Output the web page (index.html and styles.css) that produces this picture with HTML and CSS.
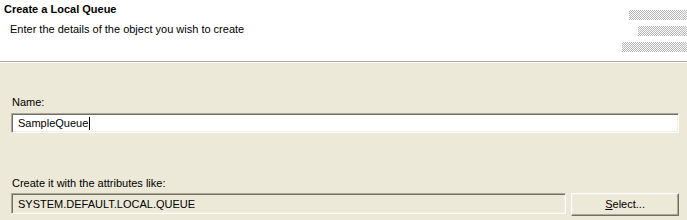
FILE: index.html
```html
<!DOCTYPE html>
<html>
<head>
<meta charset="utf-8">
<link rel="stylesheet" href="styles.css">
</head>
<body>
<div class="header">
  <div class="titles">
    <div class="title">Create a Local Queue</div>
    <div class="subtitle">Enter the details of the object you wish to create</div>
  </div>
  <div class="banner">
    <div class="bar bar1"></div>
    <div class="bar bar2"></div>
    <div class="bar bar3"></div>
  </div>
</div>
<div class="content">
  <div class="label name-label">Name:</div>
  <div class="field edit">SampleQueue<span class="caret"></span></div>
  <div class="label like-label">Create it with the attributes like:</div>
  <div class="row">
    <div class="field readonly">SYSTEM.DEFAULT.LOCAL.QUEUE</div>
    <div class="button"><span class="u">S</span>elect...</div>
  </div>
</div>
</body>
</html>
```
FILE: styles.css
```css
html, body {
  margin: 0;
  padding: 0;
  background: #ece9d8;
}
body {
  font-family: "Liberation Sans", Arial, sans-serif;
  font-size: 11px;
  line-height: 13px;
  color: #000;
  width: 687px;
  height: 220px;
  overflow: hidden;
}
.header {
  background: #fff;
  height: 61px;
  border-bottom: 1px solid #aca899;
  box-shadow: 0 1px 0 #fff;
  display: flex;
  justify-content: space-between;
}
.titles {
  padding-top: 3px;
}
.title {
  font-weight: bold;
  padding-left: 4px;
}
.subtitle {
  margin-top: 7px;
  padding-left: 10px;
}
.banner {
  width: 65px;
  display: flex;
  flex-direction: column;
  align-items: flex-end;
  padding-top: 10px;
  gap: 6px;
}
.bar {
  height: 10px;
  background: repeating-conic-gradient(#b8b8b8 0 25%, #ffffff 0 50%) 0 0 / 2px 2px;
}
.bar1 { width: 58px; }
.bar2 { width: 49px; }
.bar3 { width: 65px; }
.content {
  padding: 34px 8px 0 11px;
}
.label {
  padding-left: 1px;
}
.field {
  box-sizing: border-box;
  height: 20px;
  border: 1px solid;
  border-color: #aca899 #fff #fff #aca899;
  box-shadow: inset 1px 1px #716f64, inset -1px -1px #f1efe2;
  padding: 3px 0 0 6px;
  white-space: nowrap;
}
.edit {
  margin-top: 4px;
  background: #fff;
}
.caret {
  display: inline-block;
  width: 0;
  height: 13px;
  border-left: 1px solid #000;
  vertical-align: -3px;
  margin-left: 1px;
}
.like-label {
  margin-top: 44px;
}
.row {
  margin-top: 3px;
  display: flex;
  gap: 5px;
  align-items: flex-start;
}
.readonly {
  width: 556px;
  height: 21px;
  background: #ece9d8;
  padding-top: 4px;
}
.button {
  box-sizing: border-box;
  width: 108px;
  height: 23px;
  border: 1px solid;
  border-color: #fff #716f64 #716f64 #fff;
  box-shadow: inset -1px -1px #aca899, inset 1px 1px #f1efe2;
  text-align: center;
  padding-top: 4px;
}
.u {
  text-decoration: underline;
}
```
